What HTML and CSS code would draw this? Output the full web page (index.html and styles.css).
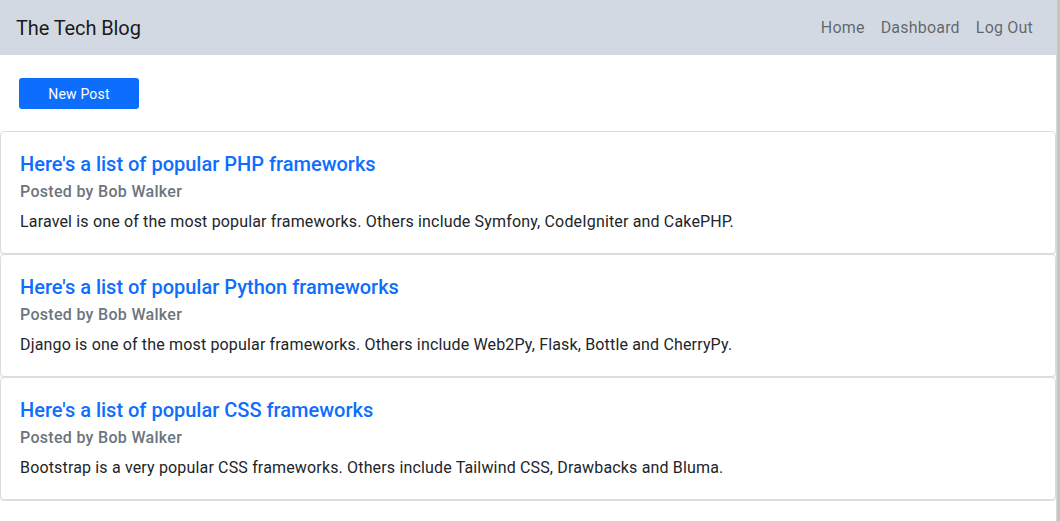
FILE: index.html
```html
<!DOCTYPE html>
<html lang="en">
<head>
<meta charset="utf-8">
<title>The Tech Blog</title>
<link rel="stylesheet" href="styles.css">
</head>
<body>
<div class="page">
  <nav class="navbar">
    <a class="brand" href="#">The Tech Blog</a>
    <ul class="nav-links">
      <li><a href="#">Home</a></li>
      <li><a href="#">Dashboard</a></li>
      <li><a href="#">Log Out</a></li>
    </ul>
  </nav>
  <main class="content">
    <div class="actions">
      <button class="btn-primary" type="button">New Post</button>
    </div>
    <section class="posts">
      <article class="card">
        <h5 class="card-title"><a href="#">Here's a list of popular PHP frameworks</a></h5>
        <h6 class="card-subtitle">Posted by Bob Walker</h6>
        <p class="card-text">Laravel is one of the most popular frameworks. Others include Symfony, CodeIgniter and CakePHP.</p>
      </article>
      <article class="card">
        <h5 class="card-title"><a href="#">Here's a list of popular Python frameworks</a></h5>
        <h6 class="card-subtitle">Posted by Bob Walker</h6>
        <p class="card-text">Django is one of the most popular frameworks. Others include Web2Py, Flask, Bottle and CherryPy.</p>
      </article>
      <article class="card">
        <h5 class="card-title"><a href="#">Here's a list of popular CSS frameworks</a></h5>
        <h6 class="card-subtitle">Posted by Bob Walker</h6>
        <p class="card-text">Bootstrap is a very popular CSS frameworks. Others include Tailwind CSS, Drawbacks and Bluma.</p>
      </article>
    </section>
  </main>
</div>
<div class="edge"></div>
</body>
</html>
```
FILE: styles.css
```css
* { box-sizing: border-box; }
html, body { margin: 0; padding: 0; height: 100%; }
body {
  display: flex;
  font-family: "Roboto", "Liberation Sans", sans-serif;
  font-size: 16px;
  color: #212529;
  background: #fff;
  overflow: hidden;
}
.page { flex: 1; min-width: 0; }
.edge {
  width: 4px;
  flex: none;
  background: #c4c4c4;
  border-left: 1px solid #d8d8d8;
}
.navbar {
  height: 55px;
  background: #d2d9e3;
  display: flex;
  align-items: center;
  justify-content: space-between;
  padding: 0 15px 0 16px;
}
.brand {
  font-size: 20px;
  color: rgba(0,0,0,.9);
  text-decoration: none;
  letter-spacing: -0.1px;
}
.nav-links {
  list-style: none;
  margin: 0;
  padding: 0;
  display: flex;
}
.nav-links a {
  display: block;
  padding: 8px;
  color: rgba(0,0,0,.55);
  text-decoration: none;
  letter-spacing: 0.2px;
}
.actions { padding: 23px 19px 22px; }
.btn-primary {
  width: 120px;
  height: 31px;
  border: 0;
  border-radius: 3px;
  background: #0d6efd;
  color: #fff;
  font-family: inherit;
  font-size: 14px;
  font-weight: 400;
  letter-spacing: 0.2px;
}
.card {
  border: 1px solid #dcdcdc;
  border-radius: 4px;
  padding: 20px 19px 19px;
  box-shadow: 0 1px 0 #e0e0e0;
}
.card-title {
  margin: 0 0 6px;
  font-size: 20px;
  line-height: 24px;
  font-weight: 500;
}
.card-title a { color: #0d6efd; text-decoration: none; }
.card-subtitle {
  margin: 0 0 9px;
  font-size: 16px;
  line-height: 19px;
  font-weight: 500;
  color: #6c757d;
  letter-spacing: 0.3px;
}
.card-text {
  margin: 0;
  line-height: 24px;
  letter-spacing: 0.16px;
}
```
